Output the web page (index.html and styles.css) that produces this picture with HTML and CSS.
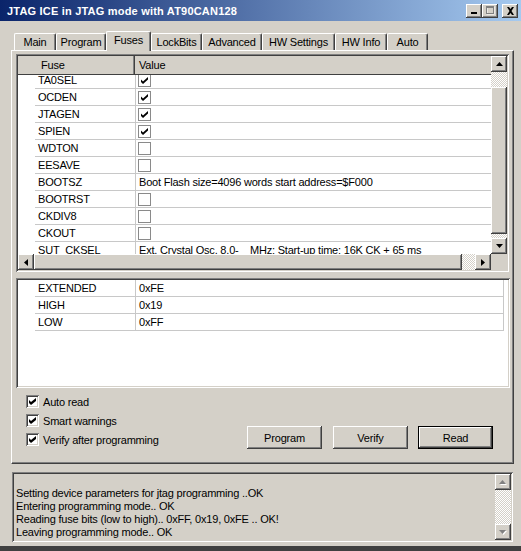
FILE: index.html
```html
<!DOCTYPE html>
<html>
<head>
<meta charset="utf-8">
<title>JTAG ICE</title>
<link rel="stylesheet" href="styles.css">
</head>
<body>
<div class="window">
  <div class="titlebar">
    <span class="title">JTAG ICE in JTAG mode with AT90CAN128</span>
    <div class="caption-btns">
      <div class="cbtn raised"><svg width="8" height="7" viewBox="0 0 8 7"><rect x="1" y="5" width="6" height="2" fill="#000"/></svg></div>
      <div class="cbtn raised"><svg width="10" height="9" viewBox="0 0 10 9"><rect x="2" y="1" width="7" height="7" fill="none" stroke="#fff" stroke-width="1"/><rect x="1.5" y="0.5" width="7" height="7" fill="none" stroke="#808080" stroke-width="1"/><rect x="1" y="0" width="8" height="2" fill="#808080"/></svg></div>
      <div class="cbtn raised close"><svg width="9" height="8" viewBox="0 0 9 8"><path d="M1 0h2l1.5 2 1.5-2h2l-2.5 4 2.5 4h-2l-1.5-2-1.5 2h-2l2.5-4z" fill="#000"/></svg></div>
    </div>
  </div>
  <div class="client">
    <div class="tabs">
      <div class="tab t1">Main</div>
      <div class="tab t2">Program</div>
      <div class="tab t3 active">Fuses</div>
      <div class="tab t4">LockBits</div>
      <div class="tab t5">Advanced</div>
      <div class="tab t6">HW Settings</div>
      <div class="tab t7">HW Info</div>
      <div class="tab t8">Auto</div>
    </div>
    <div class="page">
      <div class="grid sunken">
        <div class="grid-main">
          <div class="ghead">
            <div class="hc hc-fuse">Fuse</div>
            <div class="hc hc-val">Value</div>
          </div>
          <div class="gbody">
            <div class="rows">
              <div class="row"><div class="c-ind"></div><div class="c-fuse">TA0SEL</div><div class="c-val"><span class="gcb"><svg width="7" height="7" viewBox="0 0 7 7"><path d="M0 2.5l2 2 5-4.5v2.5l-5 4.5-2-2z" fill="#000"/></svg></span></div></div>
              <div class="row"><div class="c-ind"></div><div class="c-fuse">OCDEN</div><div class="c-val"><span class="gcb"><svg width="7" height="7" viewBox="0 0 7 7"><path d="M0 2.5l2 2 5-4.5v2.5l-5 4.5-2-2z" fill="#000"/></svg></span></div></div>
              <div class="row"><div class="c-ind"></div><div class="c-fuse">JTAGEN</div><div class="c-val"><span class="gcb"><svg width="7" height="7" viewBox="0 0 7 7"><path d="M0 2.5l2 2 5-4.5v2.5l-5 4.5-2-2z" fill="#000"/></svg></span></div></div>
              <div class="row"><div class="c-ind"></div><div class="c-fuse">SPIEN</div><div class="c-val"><span class="gcb"><svg width="7" height="7" viewBox="0 0 7 7"><path d="M0 2.5l2 2 5-4.5v2.5l-5 4.5-2-2z" fill="#000"/></svg></span></div></div>
              <div class="row"><div class="c-ind"></div><div class="c-fuse">WDTON</div><div class="c-val"><span class="gcb"></span></div></div>
              <div class="row"><div class="c-ind"></div><div class="c-fuse">EESAVE</div><div class="c-val"><span class="gcb"></span></div></div>
              <div class="row"><div class="c-ind"></div><div class="c-fuse">BOOTSZ</div><div class="c-val txt">Boot Flash size=4096 words start address=$F000</div></div>
              <div class="row"><div class="c-ind"></div><div class="c-fuse">BOOTRST</div><div class="c-val"><span class="gcb"></span></div></div>
              <div class="row"><div class="c-ind"></div><div class="c-fuse">CKDIV8</div><div class="c-val"><span class="gcb"></span></div></div>
              <div class="row"><div class="c-ind"></div><div class="c-fuse">CKOUT</div><div class="c-val"><span class="gcb"></span></div></div>
              <div class="row"><div class="c-ind"></div><div class="c-fuse">SUT_CKSEL</div><div class="c-val txt">Ext. Crystal Osc. 8.0-    MHz; Start-up time: 16K CK + 65 ms</div></div>
            </div>
          </div>
          <div class="hscroll">
            <div class="sbtn raised"><svg width="4" height="7" viewBox="0 0 4 7"><path d="M4 0v7L0 3.5z" fill="#000"/></svg></div>
            <div class="hthumb raised"></div>
            <div class="track"></div>
            <div class="sbtn raised"><svg width="4" height="7" viewBox="0 0 4 7"><path d="M0 0v7l4-3.5z" fill="#000"/></svg></div>
          </div>
        </div>
        <div class="vcol">
          <div class="vscroll">
            <div class="sbtn raised"><svg width="7" height="4" viewBox="0 0 7 4"><path d="M0 4h7L3.5 0z" fill="#000"/></svg></div>
            <div class="track vtrack1"></div>
            <div class="vthumb raised"></div>
            <div class="track"></div>
            <div class="sbtn raised"><svg width="7" height="4" viewBox="0 0 7 4"><path d="M0 0h7L3.5 4z" fill="#000"/></svg></div>
          </div>
          <div class="corner"></div>
        </div>
      </div>

      <div class="values sunken">
        <div class="vrow"><div class="c-ind"></div><div class="v-fuse">EXTENDED</div><div class="v-val">0xFE</div></div>
        <div class="vrow"><div class="c-ind"></div><div class="v-fuse">HIGH</div><div class="v-val">0x19</div></div>
        <div class="vrow"><div class="c-ind"></div><div class="v-fuse">LOW</div><div class="v-val">0xFF</div></div>
      </div>

      <div class="options">
        <div class="checks">
          <label class="chk"><span class="cb"><svg width="7" height="7" viewBox="0 0 7 7"><path d="M0 2l2 2 5-4v3l-5 4-2-2z" fill="#000"/></svg></span>Auto read</label>
          <label class="chk"><span class="cb"><svg width="7" height="7" viewBox="0 0 7 7"><path d="M0 2l2 2 5-4v3l-5 4-2-2z" fill="#000"/></svg></span>Smart warnings</label>
          <label class="chk"><span class="cb"><svg width="7" height="7" viewBox="0 0 7 7"><path d="M0 2l2 2 5-4v3l-5 4-2-2z" fill="#000"/></svg></span>Verify after programming</label>
        </div>
        <div class="buttons">
          <div class="btn raised">Program</div>
          <div class="btn raised">Verify</div>
          <div class="btn default"><div class="btn-in raised">Read</div></div>
        </div>
      </div>
    </div>

    <div class="log sunken">
      <div class="log-text">Setting device parameters for jtag programming ..OK<br>Entering programming mode.. OK<br>Reading fuse bits (low to high).. 0xFF, 0x19, 0xFE .. OK!<br>Leaving programming mode.. OK</div>
      <div class="vscroll log-scroll">
        <div class="sbtn raised"><svg width="8" height="5" viewBox="0 0 8 5"><path d="M1 5h7L4.5 1.5z" fill="#fff"/><path d="M0 4h7L3.5 0z" fill="#808080"/></svg></div>
        <div class="track"></div>
        <div class="sbtn raised"><svg width="8" height="5" viewBox="0 0 8 5"><path d="M1 1h7L4.5 5z" fill="#fff"/><path d="M0 0h7L3.5 4z" fill="#808080"/></svg></div>
      </div>
    </div>
  </div>
  <div class="foot"></div>
</div>
</body>
</html>
```

FILE: styles.css
```css
* { box-sizing: border-box; }

body {
  margin: 0;
  background: #d4d0c8;
  font-family: "Liberation Sans", Arial, sans-serif;
  font-size: 11px;
  letter-spacing: -0.2px;
  color: #000;
}

.window {
  width: 521px;
  height: 551px;
  overflow: hidden;
  background: #d4d0c8;
  display: flex;
  flex-direction: column;
}

.raised {
  background: #d4d0c8;
  box-shadow: inset -1px -1px #404040, inset 1px 1px #fff, inset -2px -2px #808080, inset 2px 2px #d4d0c8;
}

.sunken {
  box-shadow: inset 1px 1px #808080, inset -1px -1px #fff, inset 2px 2px #404040, inset -2px -2px #d4d0c8;
  padding: 2px;
}

/* title bar */
.titlebar {
  flex: none;
  width: 521px;
  height: 21px;
  background: linear-gradient(to right, #0a246a, #a6caf0);
  display: flex;
  align-items: center;
  padding: 0 3px 0 7px;
}

.title {
  color: #fff;
  font-weight: bold;
  font-size: 11px;
  letter-spacing: 0.2px;
}

.caption-btns {
  margin-left: auto;
  display: flex;
}

.cbtn {
  width: 16px;
  height: 14px;
  display: flex;
  align-items: center;
  justify-content: center;
}

.cbtn.close { margin-left: 4px; }

/* client area */
.client {
  flex: none;
  padding: 0 7px 0 11px;
}

.tabs {
  margin-top: 10px;
  height: 19px;
  display: flex;
  align-items: flex-end;
  padding-left: 3px;
}

.tab {
  height: 17px;
  line-height: 16px;
  text-align: center;
  border-top: 1px solid #fff;
  border-left: 1px solid #fff;
  border-right: 1px solid #404040;
  border-top-left-radius: 2px;
  border-top-right-radius: 2px;
  box-shadow: inset -1px 0 #808080;
  white-space: nowrap;
}

.tab.active {
  height: 20px;
  line-height: 16px;
  margin-bottom: -1px;
  padding-bottom: 3px;
  position: relative;
  z-index: 1;
  background: #d4d0c8;
}

.t1 { width: 42px; }
.t2 { width: 50px; }
.t3 { width: 45px; }
.t4 { width: 51px; }
.t5 { width: 60px; }
.t6 { width: 73px; }
.t7 { width: 52px; }
.t8 { width: 41px; }

.page {
  width: 503px;
  height: 414px;
  border-top: 1px solid #fff;
  border-left: 1px solid #fff;
  border-right: 1px solid #404040;
  border-bottom: 1px solid #404040;
  box-shadow: inset -1px -1px #808080;
  padding: 3px 0 0 4px;
  display: flex;
  flex-direction: column;
}

/* fuse grid */
.grid {
  width: 493px;
  height: 218px;
  flex: none;
  display: flex;
}

.grid-main {
  width: 473px;
  display: flex;
  flex-direction: column;
}

.ghead {
  height: 19px;
  flex: none;
  display: flex;
  border-bottom: 1px solid #404040;
  background: #d4d0c8;
}

.hc {
  line-height: 18px;
}

.hc-fuse {
  width: 117px;
  padding-left: 23px;
  border-right: 1px solid #404040;
  box-shadow: inset -1px 0 #808080;
}

.hc-val {
  flex: 1;
  padding-left: 4px;
}

.gbody {
  flex: 1;
  overflow: hidden;
  background: #fff;
}

.rows { margin-top: -3px; }

.row {
  display: flex;
  height: 17px;
}

.c-ind { width: 17px; flex: none; }

.c-fuse {
  width: 100px;
  padding-left: 3px;
  line-height: 16px;
  border-bottom: 1px solid #c8c8c8;
}

.c-val {
  width: 356px;
  border-left: 1px solid #c8c8c8;
  border-bottom: 1px solid #c8c8c8;
  padding-left: 2px;
  display: flex;
  align-items: center;
}

.c-val.txt {
  padding-left: 3px;
  white-space: pre;
  line-height: 16px;
}

.gcb {
  width: 13px;
  height: 13px;
  border: 1px solid #8a8a8a;
  background: #fff;
  display: flex;
  align-items: center;
  justify-content: center;
}

.hscroll {
  height: 16px;
  flex: none;
  display: flex;
}

.sbtn {
  width: 16px;
  height: 16px;
  flex: none;
  display: flex;
  align-items: center;
  justify-content: center;
}

.hthumb { width: 428px; flex: none; }

.track {
  flex: 1;
  background: repeating-conic-gradient(#fff 0 25%, #d4d0c8 0 50%) 0 0 / 2px 2px;
}

.vcol {
  width: 16px;
  display: flex;
  flex-direction: column;
}

.vscroll {
  flex: 1;
  display: flex;
  flex-direction: column;
}

.vtrack1 { flex: none; height: 15px; }

.vthumb { height: 147px; flex: none; }

.corner { height: 16px; background: #d4d0c8; }

/* values panel */
.values {
  margin-top: 6px;
  width: 494px;
  height: 110px;
  flex: none;
  background: #fff;
}

.vrow {
  display: flex;
  height: 17px;
}

.v-fuse {
  width: 100px;
  padding-left: 3px;
  line-height: 16px;
  border-bottom: 1px solid #c8c8c8;
}

.v-val {
  width: 369px;
  padding-left: 3px;
  line-height: 16px;
  border-left: 1px solid #c8c8c8;
  border-right: 1px solid #c8c8c8;
  border-bottom: 1px solid #c8c8c8;
}

/* options */
.options {
  flex: 1;
  display: flex;
  padding: 4px 20px 14px 10px;
}

.checks {
  display: flex;
  flex-direction: column;
}

.chk {
  height: 19px;
  display: flex;
  align-items: center;
}

.cb {
  width: 13px;
  height: 13px;
  margin-right: 4px;
  background: #fff;
  box-shadow: inset 1px 1px #808080, inset -1px -1px #fff, inset 2px 2px #404040, inset -2px -2px #d4d0c8;
  display: flex;
  align-items: center;
  justify-content: center;
}

.buttons {
  margin-left: auto;
  align-self: flex-end;
  display: flex;
}

.btn {
  width: 75px;
  height: 23px;
  display: flex;
  align-items: center;
  justify-content: center;
  margin-left: 11px;
}

.btn.default {
  margin-left: 10px;
  border: 1px solid #000;
}

.btn-in {
  width: 100%;
  height: 100%;
  display: flex;
  align-items: center;
  justify-content: center;
}

/* log */
.log {
  margin-top: 8px;
  margin-left: 1px;
  width: 501px;
  height: 70px;
  display: flex;
}

.log-text {
  flex: 1;
  padding: 13px 0 0 2px;
  line-height: 13px;
  white-space: nowrap;
}

.log-scroll {
  width: 16px;
  flex: none;
}

.foot {
  margin-top: 4px;
  flex: 1;
  background: #404040;
}
```
